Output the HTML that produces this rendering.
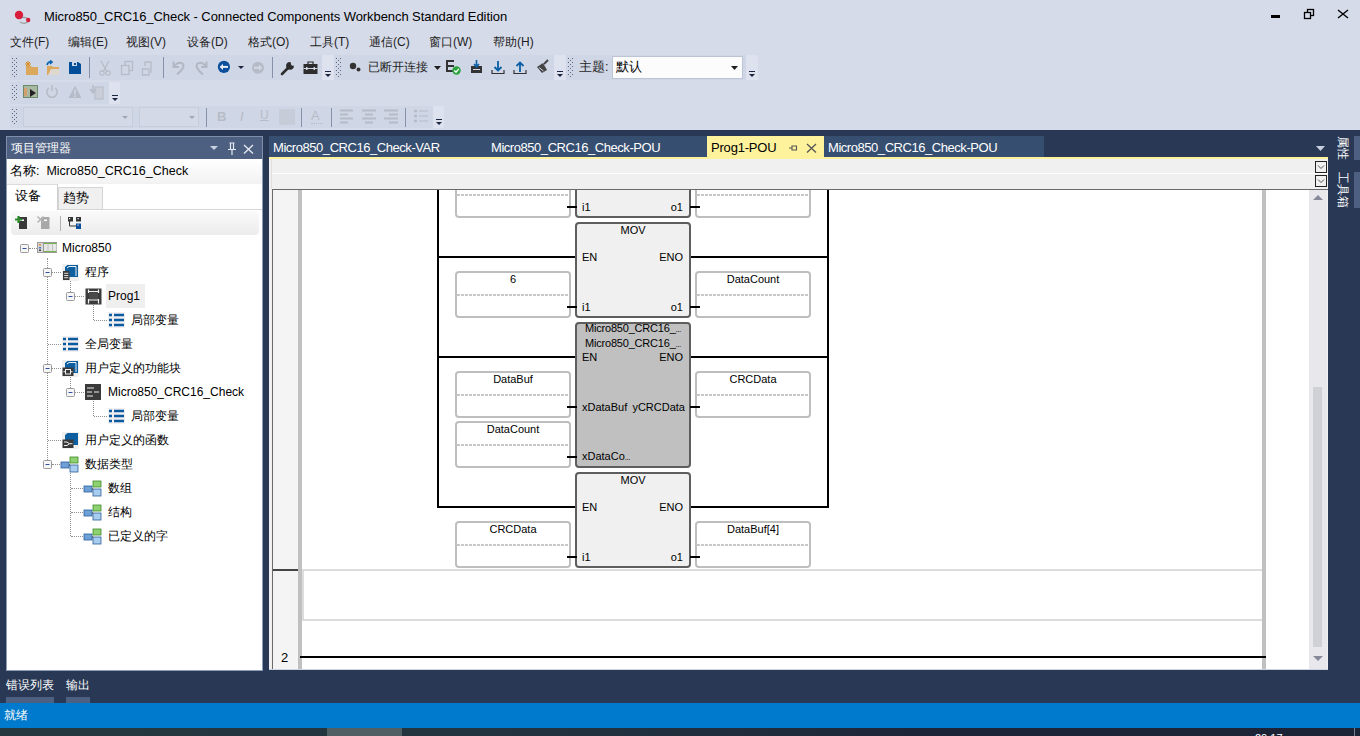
<!DOCTYPE html>
<html><head><meta charset="utf-8">
<style>
*{margin:0;padding:0;box-sizing:border-box}
html,body{width:1360px;height:736px;overflow:hidden;background:#d6dbe9;font-family:"Liberation Sans",sans-serif;font-size:12px;color:#1e1e1e}
.a{position:absolute}
.t{position:absolute;white-space:nowrap;line-height:1}
svg{position:absolute;overflow:visible}
.tb{position:absolute;background:#cfd6e5}
.ov{position:absolute;background:#dde2ee}
.grip{position:absolute;width:5px;background-image:radial-gradient(circle,#8a93a8 0.6px,transparent 0.8px);background-size:3px 3px}
.sep{position:absolute;width:1px;background:#8591a8}
.hl{position:absolute;height:2px;background:#000}
.vl{position:absolute;width:2px;background:#000}
.vb{position:absolute;width:116px;height:47px;border:2px solid #bebebe;border-radius:4px;background:#fff}
.vb .dl{position:absolute;left:0;right:0;top:21px;height:2px;background-image:linear-gradient(90deg,#c8c8c8 3px,transparent 3px);background-size:4px 2px}
.vb .vt{position:absolute;left:0;right:0;top:1px;text-align:center;font-size:11px;line-height:1;color:#000}
.blk{position:absolute;left:575px;width:116px;border:2px solid #5e5e5e;border-radius:4px;background:#f0f0f0}
.bt{position:absolute;font-size:11px;line-height:1;color:#000;white-space:nowrap}
</style></head><body>

<!-- ===== TITLE BAR ===== -->
<svg style="left:0;top:0" width="40" height="30">
  <path d="M20 18 Q27 16 29 21 Q25 25 20 22" fill="none" stroke="#9a9a9a" stroke-width="1.2"/>
  <circle cx="19" cy="15" r="4.2" fill="#d81e3c"/>
  <circle cx="28.2" cy="20" r="2.2" fill="#d81e3c"/>
</svg>
<div class="t" style="left:44px;top:10px;font-size:13px;letter-spacing:-0.07px;color:#000">Micro850_CRC16_Check - Connected Components Workbench Standard Edition</div>
<div class="a" style="left:1271px;top:15px;width:9px;height:3px;background:#000"></div>
<svg style="left:1300px;top:5px" width="20" height="20">
  <rect x="7.5" y="4.5" width="6" height="6" fill="none" stroke="#000" stroke-width="1.3"/>
  <rect x="4.5" y="7.5" width="6" height="6" fill="#d6dbe9" stroke="#000" stroke-width="1.3"/>
</svg>
<svg style="left:1333px;top:5px" width="20" height="20">
  <path d="M5 5 L15 13 M15 5 L5 13" stroke="#000" stroke-width="1.4"/>
</svg>

<!-- ===== MENU ===== -->
<div class="t" style="left:10px;top:36px;font-size:12px;color:#1e1e1e">文件(F)</div>
<div class="t" style="left:68px;top:36px;font-size:12px;color:#1e1e1e">编辑(E)</div>
<div class="t" style="left:126px;top:36px;font-size:12px;color:#1e1e1e">视图(V)</div>
<div class="t" style="left:187px;top:36px;font-size:12px;color:#1e1e1e">设备(D)</div>
<div class="t" style="left:248px;top:36px;font-size:12px;color:#1e1e1e">格式(O)</div>
<div class="t" style="left:310px;top:36px;font-size:12px;color:#1e1e1e">工具(T)</div>
<div class="t" style="left:369px;top:36px;font-size:12px;color:#1e1e1e">通信(C)</div>
<div class="t" style="left:429px;top:36px;font-size:12px;color:#1e1e1e">窗口(W)</div>
<div class="t" style="left:493px;top:36px;font-size:12px;color:#1e1e1e">帮助(H)</div>

<!-- ===== TOOLBAR ROW 1 ===== -->
<div class="tb" style="left:10px;top:55px;width:312px;height:25px"></div>
<div class="ov" style="left:322px;top:55px;width:12px;height:25px"></div>
<div class="tb" style="left:334px;top:55px;width:220px;height:25px"></div>
<div class="ov" style="left:554px;top:55px;width:12px;height:25px"></div>
<div class="tb" style="left:566px;top:55px;width:180px;height:25px"></div>
<div class="ov" style="left:746px;top:55px;width:12px;height:25px"></div>
<svg style="left:12px;top:58px" width="5" height="20" fill="#5c677e"><rect x="0" y="0" width="1" height="1"/><rect x="4" y="0" width="1" height="1"/><rect x="2" y="2" width="1" height="1"/><rect x="0" y="4" width="1" height="1"/><rect x="4" y="4" width="1" height="1"/><rect x="2" y="6" width="1" height="1"/><rect x="0" y="8" width="1" height="1"/><rect x="4" y="8" width="1" height="1"/><rect x="2" y="10" width="1" height="1"/><rect x="0" y="12" width="1" height="1"/><rect x="4" y="12" width="1" height="1"/><rect x="2" y="14" width="1" height="1"/><rect x="0" y="16" width="1" height="1"/><rect x="4" y="16" width="1" height="1"/><rect x="2" y="18" width="1" height="1"/></svg>
<svg style="left:336px;top:58px" width="5" height="20" fill="#5c677e"><rect x="0" y="0" width="1" height="1"/><rect x="4" y="0" width="1" height="1"/><rect x="2" y="2" width="1" height="1"/><rect x="0" y="4" width="1" height="1"/><rect x="4" y="4" width="1" height="1"/><rect x="2" y="6" width="1" height="1"/><rect x="0" y="8" width="1" height="1"/><rect x="4" y="8" width="1" height="1"/><rect x="2" y="10" width="1" height="1"/><rect x="0" y="12" width="1" height="1"/><rect x="4" y="12" width="1" height="1"/><rect x="2" y="14" width="1" height="1"/><rect x="0" y="16" width="1" height="1"/><rect x="4" y="16" width="1" height="1"/><rect x="2" y="18" width="1" height="1"/></svg>
<svg style="left:568px;top:58px" width="5" height="20" fill="#5c677e"><rect x="0" y="0" width="1" height="1"/><rect x="4" y="0" width="1" height="1"/><rect x="2" y="2" width="1" height="1"/><rect x="0" y="4" width="1" height="1"/><rect x="4" y="4" width="1" height="1"/><rect x="2" y="6" width="1" height="1"/><rect x="0" y="8" width="1" height="1"/><rect x="4" y="8" width="1" height="1"/><rect x="2" y="10" width="1" height="1"/><rect x="0" y="12" width="1" height="1"/><rect x="4" y="12" width="1" height="1"/><rect x="2" y="14" width="1" height="1"/><rect x="0" y="16" width="1" height="1"/><rect x="4" y="16" width="1" height="1"/><rect x="2" y="18" width="1" height="1"/></svg>
<div class="sep" style="left:89px;top:57px;height:21px"></div>
<div class="sep" style="left:163px;top:57px;height:21px"></div>
<div class="sep" style="left:272px;top:57px;height:21px"></div>
<!-- new project -->
<svg style="left:24px;top:60px" width="16" height="16">
  <path d="M2 6 H7 L8 7 H14 V15 H2 Z" fill="#dca85c"/>
  <path d="M4 1 V7 M1 4 H7 M2 2 L6 6 M6 2 L2 6" stroke="#d98a1e" stroke-width="1"/>
</svg>
<!-- open -->
<svg style="left:45px;top:60px" width="16" height="16">
  <path d="M2 6 H7 L8 7 H14 V15 H2 Z" fill="#dca85c"/>
  <path d="M6 9 H14 V15 H3 Z" fill="#dfd8cf"/>
  <path d="M2 5 Q3 1 7 2 M5 0.5 L7 2 L5 4" fill="none" stroke="#0a63b0" stroke-width="1.6"/>
</svg>
<!-- save -->
<svg style="left:68px;top:61px" width="14" height="14">
  <path d="M1 1 H10 L13 3 V13 H1 Z" fill="#004e9a"/>
  <rect x="4" y="1" width="5" height="4" fill="#cfd6e5"/>
  <rect x="6" y="2" width="2" height="2" fill="#004e9a"/>
</svg>
<!-- cut copy paste (disabled) -->
<svg style="left:98px;top:60px" width="14" height="16">
  <path d="M3 1 L9 12 M11 1 L5 12" stroke="#b6bcc7" stroke-width="1.3"/>
  <circle cx="4" cy="13" r="2.2" fill="none" stroke="#b6bcc7" stroke-width="1.2"/>
  <circle cx="10" cy="13" r="2.2" fill="none" stroke="#b6bcc7" stroke-width="1.2"/>
</svg>
<svg style="left:120px;top:60px" width="14" height="16">
  <rect x="5" y="1.5" width="7.5" height="9" fill="none" stroke="#b6bcc7" stroke-width="1.3"/>
  <rect x="1.5" y="5.5" width="7.5" height="9" fill="#cfd6e5" stroke="#b6bcc7" stroke-width="1.3"/>
</svg>
<svg style="left:141px;top:60px" width="14" height="16">
  <path d="M4 6 V2 H10 V13 M1.5 9 H8 V15 H1.5 Z" fill="none" stroke="#b6bcc7" stroke-width="1.3"/>
</svg>
<!-- undo redo -->
<svg style="left:168px;top:56px" width="20" height="20"><path d="M5.5 5.5 V11 H11" fill="none" stroke="#b2b8c4" stroke-width="2"/><path d="M6 10.5 Q10 5 14.5 7.5 Q18 11 9 18.5" fill="none" stroke="#b2b8c4" stroke-width="2"/></svg>
<svg style="left:190px;top:56px" width="20" height="20"><path d="M16.5 5.5 V11 H11" fill="none" stroke="#b2b8c4" stroke-width="2"/><path d="M16 10.5 Q12 5 7.5 7.5 Q4 11 13 18.5" fill="none" stroke="#b2b8c4" stroke-width="2"/></svg>
<!-- back -->
<svg style="left:217px;top:60px" width="14" height="14"><circle cx="6.9" cy="6.9" r="6.1" fill="#0b4f9c"/><path d="M11 6.9 H4.5" stroke="#e8ecf4" stroke-width="2"/><path d="M2.6 6.9 L6 3.8 V10 Z" fill="#e8ecf4"/></svg>
<svg style="left:238px;top:66px" width="7" height="4"><path d="M0 0 H6 L3 3 Z" fill="#1b2640"/></svg>
<svg style="left:251px;top:61px" width="14" height="14"><circle cx="7" cy="6.8" r="6" fill="#b6bcc7"/><path d="M3 6.8 H9.5" stroke="#d3d8e3" stroke-width="2"/><path d="M11.4 6.8 L8 3.8 V9.8 Z" fill="#d3d8e3"/></svg>
<!-- wrench -->
<svg style="left:280px;top:61px" width="16" height="16"><path d="M2 13 L8 7" stroke="#2d2d2d" stroke-width="2.6" stroke-linecap="round"/><circle cx="10" cy="4.8" r="3.9" fill="#2d2d2d"/><path d="M10.5 0 L15 0 L15 4.5 L12.2 4.8 L11 3.6 Z" fill="#cfd6e5"/></svg>
<!-- toolbox -->
<svg style="left:303px;top:61px" width="15" height="14">
  <path d="M5 3 V1 H10 V3" fill="none" stroke="#2d2d2d" stroke-width="1.2"/>
  <rect x="0.5" y="3" width="14" height="10" fill="#2d2d2d"/>
  <rect x="0.5" y="7" width="14" height="1" fill="#cfd6e5"/>
  <rect x="3" y="6" width="1.5" height="3" fill="#cfd6e5"/><rect x="10.5" y="6" width="1.5" height="3" fill="#cfd6e5"/>
</svg>
<!-- overflow arrows -->
<svg style="left:325px;top:71px" width="7" height="6" fill="#1b2640"><rect x="0" y="0" width="6" height="1"/><path d="M0 3 H6 L3 6 Z"/></svg>
<svg style="left:557px;top:71px" width="7" height="6" fill="#1b2640"><rect x="0" y="0" width="6" height="1"/><path d="M0 3 H6 L3 6 Z"/></svg>
<svg style="left:749px;top:71px" width="7" height="6" fill="#1b2640"><rect x="0" y="0" width="6" height="1"/><path d="M0 3 H6 L3 6 Z"/></svg>
<!-- disconnected -->
<svg style="left:348px;top:60px" width="16" height="16">
  <circle cx="5" cy="6" r="3.2" fill="#333"/>
  <circle cx="10.5" cy="9.5" r="2" fill="#333"/>
</svg>
<div class="t" style="left:368px;top:61px;font-size:12px;color:#1e1e1e">已断开连接</div>
<svg style="left:434px;top:66px" width="8" height="5"><path d="M0 0 H7 L3.5 4 Z" fill="#1e1e1e"/></svg>
<svg style="left:445px;top:59px" width="17" height="17">
  <path d="M1 1 H9 V3 H3 V6 H9 V8 H3 V11 H8 V13 H1 Z" fill="#333"/>
  <circle cx="11.5" cy="11.5" r="4.2" fill="#2aa33a"/>
  <path d="M9.3 11.5 L11 13.2 L13.8 9.8" fill="none" stroke="#fff" stroke-width="1.3"/>
</svg>
<svg style="left:470px;top:60px" width="14" height="15">
  <rect x="1" y="6" width="11" height="7" fill="#333"/>
  <rect x="3" y="9" width="7" height="1" fill="#cfd6e5"/>
  <path d="M6.5 0 V6 M4 4 L6.5 7 L9 4" fill="none" stroke="#0b5fa5" stroke-width="1.6"/>
</svg>
<svg style="left:491px;top:60px" width="14" height="15">
  <path d="M7 1 V10 M3.5 7 L7 10.5 L10.5 7" fill="none" stroke="#0b5fa5" stroke-width="1.8"/>
  <path d="M1 10 V13.5 H13 V10" fill="none" stroke="#333" stroke-width="1.2"/>
</svg>
<svg style="left:513px;top:60px" width="14" height="15">
  <path d="M7 12 V3 M3.5 6 L7 2.5 L10.5 6" fill="none" stroke="#0b5fa5" stroke-width="1.8"/>
  <path d="M1 10 V13.5 H13 V10" fill="none" stroke="#333" stroke-width="1.2"/>
</svg>
<svg style="left:535px;top:59px" width="15" height="16">
  <path d="M2 8 L8 4 L12 11 L7 14 Z" fill="#444"/>
  <path d="M4 8.5 L8.5 12" stroke="#cfd6e5" stroke-width="1"/>
  <path d="M9 5 L13 1" stroke="#444" stroke-width="2"/>
</svg>
<div class="t" style="left:579px;top:61px;font-size:12.5px;color:#1e1e1e">主题:</div>
<div class="a" style="left:612px;top:56px;width:131px;height:23px;background:#fcfcfc;border:1px solid #bcc4d6"></div>
<div class="t" style="left:616px;top:61px;font-size:12.5px;color:#000">默认</div>
<svg style="left:731px;top:66px" width="8" height="5"><path d="M0 0 H7 L3.5 4 Z" fill="#1e1e1e"/></svg>

<!-- ===== TOOLBAR ROW 2 ===== -->
<div class="tb" style="left:10px;top:82px;width:99px;height:22px"></div>
<div class="ov" style="left:109px;top:82px;width:11px;height:22px"></div>
<svg style="left:12px;top:85px" width="5" height="16" fill="#5c677e"><rect x="0" y="0" width="1" height="1"/><rect x="4" y="0" width="1" height="1"/><rect x="2" y="2" width="1" height="1"/><rect x="0" y="4" width="1" height="1"/><rect x="4" y="4" width="1" height="1"/><rect x="2" y="6" width="1" height="1"/><rect x="0" y="8" width="1" height="1"/><rect x="4" y="8" width="1" height="1"/><rect x="2" y="10" width="1" height="1"/><rect x="0" y="12" width="1" height="1"/><rect x="4" y="12" width="1" height="1"/><rect x="2" y="14" width="1" height="1"/></svg>
<svg style="left:23px;top:85px" width="16" height="14">
  <rect x="0" y="0" width="15" height="13" fill="#6a8a6a"/>
  <rect x="1" y="1" width="13" height="11" fill="#a9b8a0"/>
  <rect x="1" y="3" width="3" height="8" fill="#d4a070"/>
  <path d="M7 4 L13 8 L7 12 Z" fill="#222"/>
</svg>
<svg style="left:45px;top:84px" width="14" height="15">
  <path d="M3.8 4 A5.2 5.2 0 1 0 10.2 4" fill="none" stroke="#b6bcc7" stroke-width="1.5"/>
  <path d="M7 1 V7" stroke="#b6bcc7" stroke-width="1.5"/>
</svg>
<svg style="left:68px;top:85px" width="14" height="14">
  <path d="M7 0.5 L13.5 13 H0.5 Z" fill="#b6bcc7"/>
  <rect x="6.2" y="4.5" width="1.6" height="5" fill="#cfd6e5"/>
  <rect x="6.2" y="10.5" width="1.6" height="1.5" fill="#cfd6e5"/>
</svg>
<svg style="left:89px;top:84px" width="16" height="16">
  <rect x="6" y="3" width="8" height="12" fill="#c9ced9" stroke="#b6bcc7"/>
  <path d="M4 1 V8 M1 5 L4 9 L7 5" fill="none" stroke="#b6bcc7" stroke-width="1.6"/>
</svg>
<svg style="left:112px;top:95px" width="7" height="6" fill="#1b2640"><rect x="0" y="0" width="6" height="1"/><path d="M0 3 H6 L3 6 Z"/></svg>

<!-- ===== TOOLBAR ROW 3 ===== -->
<div class="tb" style="left:10px;top:106px;width:423px;height:22px"></div>
<div class="ov" style="left:433px;top:106px;width:11px;height:22px"></div>
<svg style="left:12px;top:109px" width="5" height="16" fill="#5c677e"><rect x="0" y="0" width="1" height="1"/><rect x="4" y="0" width="1" height="1"/><rect x="2" y="2" width="1" height="1"/><rect x="0" y="4" width="1" height="1"/><rect x="4" y="4" width="1" height="1"/><rect x="2" y="6" width="1" height="1"/><rect x="0" y="8" width="1" height="1"/><rect x="4" y="8" width="1" height="1"/><rect x="2" y="10" width="1" height="1"/><rect x="0" y="12" width="1" height="1"/><rect x="4" y="12" width="1" height="1"/><rect x="2" y="14" width="1" height="1"/></svg>
<div class="a" style="left:23px;top:107px;width:110px;height:20px;border:1px solid #c6cddc;background:#d3d9e7"></div>
<svg style="left:122px;top:116px" width="7" height="4"><path d="M0 0 H6 L3 3 Z" fill="#a0a7b5"/></svg>
<div class="a" style="left:139px;top:107px;width:60px;height:20px;border:1px solid #c6cddc;background:#d3d9e7"></div>
<svg style="left:189px;top:116px" width="7" height="4"><path d="M0 0 H6 L3 3 Z" fill="#a0a7b5"/></svg>
<div class="sep" style="left:206px;top:108px;height:19px"></div>
<div class="sep" style="left:301px;top:108px;height:19px"></div>
<div class="sep" style="left:331px;top:108px;height:19px"></div>
<div class="sep" style="left:405px;top:108px;height:19px"></div>
<div class="t" style="left:217px;top:110px;font-size:13px;font-weight:bold;color:#b6bcc7">B</div>
<div class="t" style="left:240px;top:110px;font-size:13px;font-style:italic;color:#b6bcc7">I</div>
<div class="t" style="left:260px;top:109px;font-size:12px;text-decoration:underline;color:#b6bcc7">U</div>
<div class="a" style="left:279px;top:109px;width:16px;height:16px;background:#c6ccd8"></div>
<div class="t" style="left:311px;top:109px;font-size:13px;color:#b6bcc7">A</div>
<div class="a" style="left:311px;top:123px;width:12px;height:1px;border-top:1px dotted #b6bcc7"></div>
<svg style="left:340px;top:109px" width="60" height="16">
  <path d="M0 1.5 H13 M0 5.5 H8 M0 9.5 H13 M0 13.5 H8" stroke="#b6bcc7" stroke-width="1.8"/>
  <path d="M22 1.5 H36 M25 5.5 H33 M22 9.5 H36 M25 13.5 H33" stroke="#b6bcc7" stroke-width="1.8"/>
  <path d="M44 1.5 H58 M49 5.5 H58 M44 9.5 H58 M49 13.5 H58" stroke="#b6bcc7" stroke-width="1.8"/>
</svg>
<svg style="left:414px;top:109px" width="16" height="16">
  <path d="M0 2 H3 M0 7 H3 M0 12 H3" stroke="#b6bcc7" stroke-width="2.5"/>
  <path d="M5 2 H14 M5 7 H14 M5 12 H14" stroke="#b6bcc7" stroke-width="1.2"/>
</svg>
<svg style="left:436px;top:119px" width="7" height="6" fill="#1b2640"><rect x="0" y="0" width="6" height="1"/><path d="M0 3 H6 L3 6 Z"/></svg>


<!-- ===== DARK BACKGROUND ===== -->
<div class="a" style="left:0;top:130px;width:1360px;height:573px;background:#293955"></div>

<!-- ===== LEFT PANEL ===== -->
<div class="a" style="left:6px;top:136px;width:257px;height:535px;background:#fff;border:1px solid #8e9bb6;border-top:none"></div>
<div class="a" style="left:6px;top:136px;width:257px;height:23px;background:#4d6082;border-top:1px solid #7f8eab;border-left:1px solid #7f8eab;border-right:1px solid #7f8eab"></div>
<div class="t" style="left:11px;top:142px;font-size:12px;color:#fff">项目管理器</div>
<svg style="left:210px;top:146px" width="9" height="5"><path d="M0 0 H8 L4 4 Z" fill="#c8d0e0"/></svg>
<svg style="left:226px;top:142px" width="12" height="14">
  <path d="M3.5 1 H8.5 M4.5 1 V7 M7.5 1 V7 M2 7.5 H10 M6 7.5 V13" fill="none" stroke="#e6eaf2" stroke-width="1.2"/>
</svg>
<svg style="left:243px;top:144px" width="12" height="11">
  <path d="M1 1 L10 9.5 M10 1 L1 9.5" stroke="#e6eaf2" stroke-width="1.3"/>
</svg>
<div class="a" style="left:7px;top:159px;width:255px;height:25px;background:linear-gradient(#ffffff,#f2f2f2)"></div>
<div class="t" style="left:10px;top:165px;font-size:12.5px;color:#000">名称:&nbsp;&nbsp;Micro850_CRC16_Check</div>
<!-- tabs -->
<div class="a" style="left:7px;top:184px;width:51px;height:26px;background:#fff;border-top:1px solid #dcdcdc;border-right:1px solid #d0d0d0"></div>
<div class="a" style="left:58px;top:187px;width:45px;height:22px;background:#f0f0f0;border:1px solid #d5d5d5;border-bottom:none"></div>
<div class="a" style="left:7px;top:209px;width:255px;height:1px;background:#d5d5d5"></div>
<div class="a" style="left:7px;top:184px;width:51px;height:26px;background:#fff;border-top:1px solid #dcdcdc;border-right:1px solid #d0d0d0"></div>
<div class="t" style="left:15px;top:190px;font-size:12.5px;color:#000">设备</div>
<div class="t" style="left:63px;top:192px;font-size:12.5px;color:#000">趋势</div>
<!-- panel toolbar -->
<div class="a" style="left:11px;top:211px;width:248px;height:24px;border-radius:4px;background:linear-gradient(#fafafa,#ececec)"></div>
<svg style="left:14px;top:215px" width="14" height="15">
  <path d="M5 2 H13 V14 H5 Z" fill="#383838"/>
  <path d="M5 4.5 H10 V6 H5 Z" fill="#fff"/>
  <path d="M4.5 1 V8 M1 4.5 H8" stroke="#2a8a2a" stroke-width="2.2"/>
</svg>
<svg style="left:36px;top:215px" width="14" height="15">
  <path d="M5 2 H13.5 V14 H5 Z" fill="#a8a8a8"/>
  <path d="M8 4.5 H11 V6 H8 Z" fill="#fff"/>
  <path d="M1.5 1.5 L7.5 7.5 M7.5 1.5 L1.5 7.5" stroke="#b4b4b4" stroke-width="1.5"/>
</svg>
<div class="a" style="left:60px;top:216px;width:1px;height:15px;background:#b0b0b0"></div>
<svg style="left:67px;top:215px" width="15" height="15">
  <rect x="1" y="2" width="5" height="4.5" fill="#333"/><rect x="9" y="2" width="5" height="4.5" fill="#333"/>
  <rect x="2" y="3" width="1.2" height="1.2" fill="#fff"/><rect x="10.5" y="3" width="1.2" height="1.2" fill="#fff"/>
  <path d="M2.5 6 V11 H9" fill="none" stroke="#333" stroke-width="1"/>
  <rect x="9" y="8.5" width="5" height="5.5" fill="#0a4e9a"/>
  <rect x="10.5" y="9.5" width="1.2" height="1.2" fill="#fff"/>
</svg>

<!-- tree lines -->
<div class="a" style="left:47px;top:258px;width:1px;height:206px;border-left:1px dotted #909090"></div>
<div class="a" style="left:29px;top:248px;width:8px;height:1px;border-top:1px dotted #909090"></div>
<div class="a" style="left:52px;top:272px;width:9px;height:1px;border-top:1px dotted #909090"></div>
<div class="a" style="left:48px;top:344px;width:13px;height:1px;border-top:1px dotted #909090"></div>
<div class="a" style="left:52px;top:368px;width:9px;height:1px;border-top:1px dotted #909090"></div>
<div class="a" style="left:48px;top:440px;width:13px;height:1px;border-top:1px dotted #909090"></div>
<div class="a" style="left:52px;top:464px;width:8px;height:1px;border-top:1px dotted #909090"></div>
<div class="a" style="left:70px;top:281px;width:1px;height:11px;border-left:1px dotted #909090"></div>
<div class="a" style="left:75px;top:296px;width:9px;height:1px;border-top:1px dotted #909090"></div>
<div class="a" style="left:93px;top:305px;width:1px;height:15px;border-left:1px dotted #909090"></div>
<div class="a" style="left:94px;top:320px;width:13px;height:1px;border-top:1px dotted #909090"></div>
<div class="a" style="left:70px;top:377px;width:1px;height:11px;border-left:1px dotted #909090"></div>
<div class="a" style="left:75px;top:392px;width:9px;height:1px;border-top:1px dotted #909090"></div>
<div class="a" style="left:93px;top:401px;width:1px;height:15px;border-left:1px dotted #909090"></div>
<div class="a" style="left:94px;top:416px;width:13px;height:1px;border-top:1px dotted #909090"></div>
<div class="a" style="left:70px;top:473px;width:1px;height:63px;border-left:1px dotted #909090"></div>
<div class="a" style="left:71px;top:488px;width:12px;height:1px;border-top:1px dotted #909090"></div>
<div class="a" style="left:71px;top:512px;width:12px;height:1px;border-top:1px dotted #909090"></div>
<div class="a" style="left:71px;top:536px;width:12px;height:1px;border-top:1px dotted #909090"></div>

<!-- expanders -->
<svg style="left:20px;top:244px" width="10" height="10"><rect x="0.5" y="0.5" width="8" height="8" rx="1" fill="#f6f6f6" stroke="#9a9a9a"/><path d="M2.5 4.5 H6.5" stroke="#3050a0"/></svg>
<svg style="left:43px;top:268px" width="10" height="10"><rect x="0.5" y="0.5" width="8" height="8" rx="1" fill="#f6f6f6" stroke="#9a9a9a"/><path d="M2.5 4.5 H6.5" stroke="#3050a0"/></svg>
<svg style="left:66px;top:292px" width="10" height="10"><rect x="0.5" y="0.5" width="8" height="8" rx="1" fill="#f6f6f6" stroke="#9a9a9a"/><path d="M2.5 4.5 H6.5" stroke="#3050a0"/></svg>
<svg style="left:43px;top:364px" width="10" height="10"><rect x="0.5" y="0.5" width="8" height="8" rx="1" fill="#f6f6f6" stroke="#9a9a9a"/><path d="M2.5 4.5 H6.5" stroke="#3050a0"/></svg>
<svg style="left:66px;top:388px" width="10" height="10"><rect x="0.5" y="0.5" width="8" height="8" rx="1" fill="#f6f6f6" stroke="#9a9a9a"/><path d="M2.5 4.5 H6.5" stroke="#3050a0"/></svg>
<svg style="left:43px;top:460px" width="10" height="10"><rect x="0.5" y="0.5" width="8" height="8" rx="1" fill="#f6f6f6" stroke="#9a9a9a"/><path d="M2.5 4.5 H6.5" stroke="#3050a0"/></svg>

<!-- icons -->
<svg style="left:37px;top:242px" width="21" height="11">
  <rect x="0" y="0" width="20" height="11" fill="#9a9a9a"/>
  <rect x="1" y="1" width="5" height="9" fill="#d8d8d8"/>
  <rect x="2" y="2" width="2" height="1.5" fill="#e08a3c"/><rect x="2" y="5" width="2" height="1.5" fill="#3c7ac0"/><rect x="2" y="7.5" width="2" height="1.5" fill="#444"/>
  <rect x="7" y="1" width="12.5" height="9" fill="#e6e6e6"/>
  <rect x="7" y="1" width="12.5" height="1" fill="#6db33f"/><rect x="7" y="9" width="12.5" height="1" fill="#6db33f"/>
  <path d="M11 1 V10 M15.5 1 V10" stroke="#b0b0b0" stroke-width="0.7"/>
</svg>
<svg style="left:62px;top:264px" width="17" height="17">
  <rect x="0" y="0" width="17" height="17" fill="#f0f0f0"/>
  <path d="M3 3 L5.5 1 H16 V13 H3 Z" fill="#0d5fa0"/>
  <path d="M5 4 L7 2.5 H14 V12" fill="none" stroke="#fff" stroke-width="0.9"/>
  <rect x="1" y="7" width="6.5" height="9" fill="#3a3a3a"/>
  <path d="M2.2 9.3 H6.3 M2.2 11.5 H6.3 M2.2 13.7 H6.3" stroke="#e0e0e0" stroke-width="1"/>
</svg>
<svg style="left:85px;top:288px" width="17" height="17">
  <rect x="0.5" y="0.5" width="16" height="16" fill="#3c3c3c"/>
  <rect x="4" y="4.5" width="9" height="7" fill="#4a4a4a"/>
  <path d="M3.5 1.5 V5 M13.5 1.5 V5 M3.5 11 V15.5 M13.5 11 V15.5 M3.5 3.5 H13.5 M3.5 12 H13.5" stroke="#f4f4f4" stroke-width="1.2"/>
</svg>
<div class="a" style="left:106px;top:284px;width:39px;height:24px;background:#efefef"></div>
<svg style="left:108px;top:312px" width="17" height="16">
  <rect x="0" y="0" width="17" height="16" fill="#f0f0f0"/>
  <path d="M1 3 H4 M1 8 H4 M1 13 H4" stroke="#0a5aa0" stroke-width="2.4"/>
  <path d="M6 3 H16 M6 8 H16 M6 13 H16" stroke="#0a5aa0" stroke-width="2.4"/>
</svg>
<svg style="left:62px;top:336px" width="17" height="16">
  <rect x="0" y="0" width="17" height="16" fill="#f0f0f0"/>
  <path d="M1 3 H4 M1 8 H4 M1 13 H4" stroke="#0a5aa0" stroke-width="2.4"/>
  <path d="M6 3 H16 M6 8 H16 M6 13 H16" stroke="#0a5aa0" stroke-width="2.4"/>
</svg>
<svg style="left:62px;top:360px" width="17" height="17">
  <rect x="0" y="0" width="17" height="17" fill="#f0f0f0"/>
  <path d="M3 3 L5.5 1 H16 V13 H3 Z" fill="#0d5fa0"/>
  <path d="M5 4 L7 2.5 H14 V12" fill="none" stroke="#fff" stroke-width="0.9"/>
  <rect x="0.5" y="7.5" width="11" height="8.5" fill="#383838"/>
  <rect x="3.5" y="9.5" width="5" height="4.5" fill="none" stroke="#eee" stroke-width="1"/>
  <path d="M1.5 11.7 H3.5 M8.5 11.7 H10.5" stroke="#eee" stroke-width="1"/>
</svg>
<svg style="left:85px;top:384px" width="16" height="16">
  <rect x="0" y="0" width="16" height="16" fill="#3a3a3a"/>
  <path d="M2 4 H9 M2 8 H7 M9 8 H14 M2 12 H8" stroke="#eee" stroke-width="1.2"/>
</svg>
<svg style="left:108px;top:408px" width="17" height="16">
  <rect x="0" y="0" width="17" height="16" fill="#f0f0f0"/>
  <path d="M1 3 H4 M1 8 H4 M1 13 H4" stroke="#0a5aa0" stroke-width="2.4"/>
  <path d="M6 3 H16 M6 8 H16 M6 13 H16" stroke="#0a5aa0" stroke-width="2.4"/>
</svg>
<svg style="left:62px;top:432px" width="17" height="17">
  <rect x="0" y="0" width="17" height="17" fill="#f0f0f0"/>
  <path d="M3 3 L5.5 1 H16 V13 H3 Z" fill="#0d5fa0"/>
  <rect x="0.5" y="7.5" width="11" height="8.5" fill="#383838"/>
  <path d="M2 10 H5 L7.5 11.7 L5 13.5 H2 M7.5 11.7 H10.5" fill="none" stroke="#eee" stroke-width="1"/>
</svg>
<svg style="left:60px;top:456px" width="19" height="17">
  <rect x="1" y="6" width="8" height="6" fill="#6ea0d8" stroke="#2c5f9a" stroke-width="0.8"/>
  <rect x="10" y="1" width="8" height="6" fill="#8fd070" stroke="#3c8a2a" stroke-width="0.8"/>
  <rect x="10" y="9" width="8" height="7" fill="#a8cdf0" stroke="#2c5f9a" stroke-width="0.8"/>
  <path d="M9 9 H10" stroke="#333"/>
</svg>
<svg style="left:83px;top:480px" width="19" height="17">
  <rect x="1" y="6" width="8" height="6" fill="#6ea0d8" stroke="#2c5f9a" stroke-width="0.8"/>
  <rect x="10" y="1" width="8" height="6" fill="#8fd070" stroke="#3c8a2a" stroke-width="0.8"/>
  <rect x="10" y="9" width="8" height="7" fill="#a8cdf0" stroke="#2c5f9a" stroke-width="0.8"/>
  <path d="M9 9 H10" stroke="#333"/>
</svg>
<svg style="left:83px;top:504px" width="19" height="17">
  <rect x="1" y="6" width="8" height="6" fill="#6ea0d8" stroke="#2c5f9a" stroke-width="0.8"/>
  <rect x="10" y="1" width="8" height="6" fill="#8fd070" stroke="#3c8a2a" stroke-width="0.8"/>
  <rect x="10" y="9" width="8" height="7" fill="#a8cdf0" stroke="#2c5f9a" stroke-width="0.8"/>
  <path d="M9 9 H10" stroke="#333"/>
</svg>
<svg style="left:83px;top:528px" width="19" height="17">
  <rect x="1" y="6" width="8" height="6" fill="#6ea0d8" stroke="#2c5f9a" stroke-width="0.8"/>
  <rect x="10" y="1" width="8" height="6" fill="#8fd070" stroke="#3c8a2a" stroke-width="0.8"/>
  <rect x="10" y="9" width="8" height="7" fill="#a8cdf0" stroke="#2c5f9a" stroke-width="0.8"/>
  <path d="M9 9 H10" stroke="#333"/>
</svg>

<!-- tree text -->
<div class="t" style="left:62px;top:242px;font-size:12px;color:#000">Micro850</div>
<div class="t" style="left:85px;top:266px;font-size:12px;color:#000">程序</div>
<div class="t" style="left:108px;top:290px;font-size:12px;color:#000">Prog1</div>
<div class="t" style="left:131px;top:314px;font-size:12px;color:#000">局部变量</div>
<div class="t" style="left:85px;top:338px;font-size:12px;color:#000">全局变量</div>
<div class="t" style="left:85px;top:362px;font-size:12px;color:#000">用户定义的功能块</div>
<div class="t" style="left:108px;top:386px;font-size:12px;color:#000">Micro850_CRC16_Check</div>
<div class="t" style="left:131px;top:410px;font-size:12px;color:#000">局部变量</div>
<div class="t" style="left:85px;top:434px;font-size:12px;color:#000">用户定义的函数</div>
<div class="t" style="left:85px;top:458px;font-size:12px;color:#000">数据类型</div>
<div class="t" style="left:108px;top:482px;font-size:12px;color:#000">数组</div>
<div class="t" style="left:108px;top:506px;font-size:12px;color:#000">结构</div>
<div class="t" style="left:108px;top:530px;font-size:12px;color:#000">已定义的字</div>


<div class="a" style="left:269px;top:136px;width:438px;height:21px;background:#364e6f"></div>
<div class="a" style="left:824px;top:136px;width:220px;height:21px;background:#364e6f"></div>
<div class="a" style="left:707px;top:136px;width:117px;height:21px;background:#fff29d"></div>
<div class="t" style="left:273px;top:141px;font-size:13px;letter-spacing:-0.45px;color:#fff">Micro850_CRC16_Check-VAR</div>
<div class="t" style="left:491px;top:141px;font-size:13px;letter-spacing:-0.45px;color:#fff">Micro850_CRC16_Check-POU</div>
<div class="t" style="left:711px;top:141px;font-size:13px;letter-spacing:-0.2px;color:#000">Prog1-POU</div>
<div class="t" style="left:828px;top:141px;font-size:13px;letter-spacing:-0.45px;color:#fff">Micro850_CRC16_Check-POU</div>
<svg style="left:788px;top:143px" width="10" height="10"><path d="M1 5 H4 M4 2.5 V7.5 M4 3 H8.5 V7 H4" fill="none" stroke="#555" stroke-width="1.1"/></svg>
<svg style="left:806px;top:143px" width="11" height="11"><path d="M1 1 L10 9.5 M10 1 L1 9.5" stroke="#555" stroke-width="1.3"/></svg>
<svg style="left:1316px;top:146px" width="10" height="6"><path d="M0 0 H9 L4.5 5 Z" fill="#c8d0e0"/></svg>
<div class="a" style="left:269px;top:157px;width:1059px;height:2px;background:#fff29d"></div>
<div class="a" style="left:269px;top:159px;width:1059px;height:510px;background:#f0f0f0"></div>
<div class="a" style="left:271px;top:173px;width:1057px;height:1px;background:#fff"></div>
<div class="a" style="left:271px;top:159px;width:1px;height:30px;background:#e0e0e0"></div>
<svg style="left:1315px;top:161px" width="13" height="13"><rect x="0.5" y="0.5" width="11" height="11" fill="#f0f0f0" stroke="#222"/><path d="M3 4.5 L6 7.5 L9 4.5" fill="none" stroke="#555" stroke-width="1"/></svg>
<svg style="left:1315px;top:175px" width="13" height="13"><rect x="0.5" y="0.5" width="11" height="11" fill="#f0f0f0" stroke="#222"/><path d="M3 4.5 L6 7.5 L9 4.5" fill="none" stroke="#555" stroke-width="1"/></svg>
<div class="a" style="left:272px;top:189px;width:1056px;height:1px;background:#6a6a6a"></div>
<div class="a" style="left:272px;top:189px;width:1px;height:480px;background:#6a6a6a"></div>
<div class="a" style="left:273px;top:190px;width:1036px;height:479px;background:#fff"></div>
<div class="a" style="left:273px;top:190px;width:25px;height:479px;background:#f4f4f4"></div>
<div class="a" style="left:298px;top:190px;width:4px;height:479px;background:#c0c0c0"></div>
<div class="a" style="left:1262px;top:190px;width:4px;height:479px;background:#c0c0c0"></div>
<div class="a" style="left:273px;top:569px;width:25px;height:2px;background:#444"></div>
<div class="a" style="left:302px;top:569px;width:960px;height:52px;border:2px solid #dcdcdc;border-right:none"></div>
<div class="t" style="left:281px;top:651px;font-size:13px;color:#000">2</div>
<div class="a" style="left:300px;top:656px;width:966px;height:2px;background:#000"></div>
<div class="a" style="left:1309px;top:190px;width:18px;height:479px;background:#e8e8ec"></div>
<svg style="left:1312px;top:193px" width="12" height="8"><path d="M1 7 L6 2 L11 7 Z" fill="#868999"/></svg>
<svg style="left:1312px;top:655px" width="12" height="8"><path d="M1 1 L6 6 L11 1 Z" fill="#868999"/></svg>
<div class="a" style="left:1313px;top:387px;width:9px;height:260px;background:#d0d1d7"></div>
<div class="a" style="left:269px;top:669px;width:1059px;height:1px;background:#cdd3e0"></div>
<div class="a" style="left:0;top:0;width:1360px;height:736px;clip-path:inset(190px 98px 67px 302px)"><div class="vl" style="left:437px;top:150px;height:358px"></div><div class="vl" style="left:827px;top:150px;height:358px"></div><div class="hl" style="left:438px;top:256px;width:139px"></div><div class="hl" style="left:690px;top:256px;width:138px"></div><div class="hl" style="left:438px;top:356px;width:139px"></div><div class="hl" style="left:690px;top:356px;width:138px"></div><div class="hl" style="left:438px;top:506px;width:139px"></div><div class="hl" style="left:690px;top:506px;width:138px"></div><div class="blk" style="top:122px;height:96px;"></div><div class="vb" style="left:455px;top:171px"><div class="dl"></div><div class="vt"></div></div><div class="hl" style="left:567px;top:206px;width:10px"></div><div class="vb" style="left:695px;top:171px"><div class="dl"></div><div class="vt"></div></div><div class="hl" style="left:690px;top:206px;width:10px"></div><div class="bt" style="left:582px;top:202px">i1</div><div class="bt" style="right:677px;top:202px">o1</div><div class="blk" style="top:222px;height:96px;"></div><div class="bt" style="left:573px;width:120px;text-align:center;top:225px">MOV</div><div class="bt" style="left:582px;top:252px">EN</div><div class="bt" style="right:677px;top:252px">ENO</div><div class="bt" style="left:582px;top:302px">i1</div><div class="bt" style="right:677px;top:302px">o1</div><div class="vb" style="left:455px;top:271px"><div class="dl"></div><div class="vt">6</div></div><div class="hl" style="left:567px;top:306px;width:10px"></div><div class="vb" style="left:695px;top:271px"><div class="dl"></div><div class="vt">DataCount</div></div><div class="hl" style="left:690px;top:306px;width:10px"></div><div class="blk" style="top:322px;height:146px;background:#c0c0c0"></div><div class="bt" style="left:585px;top:323px"><span style="letter-spacing:-0.2px">Micro850_CRC16_</span><span style="font-size:8px;letter-spacing:-0.5px">...</span></div><div class="bt" style="left:585px;top:338px"><span style="letter-spacing:-0.2px">Micro850_CRC16_</span><span style="font-size:8px;letter-spacing:-0.5px">...</span></div><div class="bt" style="left:582px;top:352px">EN</div><div class="bt" style="right:677px;top:352px">ENO</div><div class="bt" style="left:582px;top:402px">xDataBuf</div><div class="bt" style="right:675px;top:402px">yCRCData</div><div class="bt" style="left:582px;top:451px">xDataCo<span style="font-size:8px;letter-spacing:-0.5px">...</span></div><div class="vb" style="left:455px;top:371px"><div class="dl"></div><div class="vt">DataBuf</div></div><div class="hl" style="left:567px;top:406px;width:10px"></div><div class="vb" style="left:695px;top:371px"><div class="dl"></div><div class="vt">CRCData</div></div><div class="hl" style="left:690px;top:406px;width:10px"></div><div class="vb" style="left:455px;top:421px"><div class="dl"></div><div class="vt">DataCount</div></div><div class="hl" style="left:567px;top:456px;width:10px"></div><div class="blk" style="top:472px;height:96px;"></div><div class="bt" style="left:573px;width:120px;text-align:center;top:475px">MOV</div><div class="bt" style="left:582px;top:502px">EN</div><div class="bt" style="right:677px;top:502px">ENO</div><div class="bt" style="left:582px;top:552px">i1</div><div class="bt" style="right:677px;top:552px">o1</div><div class="vb" style="left:455px;top:521px"><div class="dl"></div><div class="vt">CRCData</div></div><div class="hl" style="left:567px;top:556px;width:10px"></div><div class="vb" style="left:695px;top:521px"><div class="dl"></div><div class="vt">DataBuf[4]</div></div><div class="hl" style="left:690px;top:556px;width:10px"></div></div>

<!-- ===== RIGHT STRIP ===== -->
<div class="a" style="left:1354px;top:136px;width:6px;height:24px;background:#4d6082"></div>
<div class="a" style="left:1354px;top:172px;width:6px;height:36px;background:#4d6082"></div>
<div class="t" style="left:1349px;top:136px;font-size:12px;color:#fff;transform:rotate(90deg);transform-origin:0 0">属性</div>
<div class="t" style="left:1349px;top:172px;font-size:12px;color:#fff;transform:rotate(90deg);transform-origin:0 0">工具箱</div>

<!-- ===== BOTTOM TABS ===== -->
<div class="t" style="left:6px;top:679px;font-size:12px;color:#fff">错误列表</div>
<div class="t" style="left:66px;top:679px;font-size:12px;color:#fff">输出</div>
<div class="a" style="left:6px;top:697px;width:48px;height:6px;background:#4d6082"></div>
<div class="a" style="left:66px;top:697px;width:24px;height:6px;background:#4d6082"></div>

<!-- ===== STATUS ===== -->
<div class="a" style="left:0;top:703px;width:1360px;height:25px;background:#007acc"></div>
<div class="t" style="left:4px;top:709px;font-size:12px;color:#fff">就绪</div>
<div class="a" style="left:0;top:728px;width:1360px;height:8px;background:linear-gradient(90deg,#24393f 0%,#22333f 40%,#1d2538 70%,#1c2336 100%)"></div>
<div class="a" style="left:327px;top:728px;width:75px;height:8px;background:#505f64"></div>
<div class="t" style="left:1255px;top:733px;font-size:11px;color:#fff">20:17</div>
<div class="a" style="left:1354px;top:728px;width:1px;height:8px;background:#7a8090"></div>

</body></html>
